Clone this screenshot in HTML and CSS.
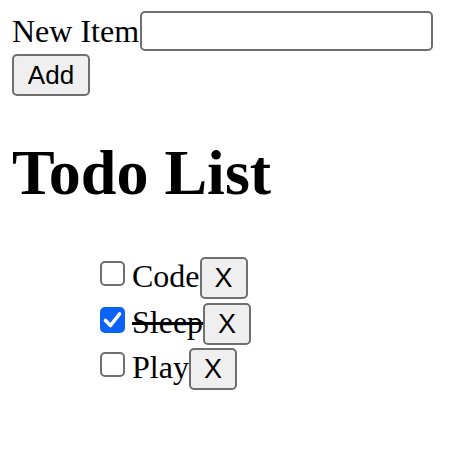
FILE: index.html
```html
<!DOCTYPE html>
<html>
<head>
<meta charset="utf-8">
<link rel="stylesheet" href="styles.css">
</head>
<body>
<div class="form-row">
  <label class="label" for="item">New Item</label>
  <input id="item" class="text-input" type="text">
</div>
<button class="btn add-btn">Add</button>
<h1 class="title">Todo List</h1>
<ul class="todo-list">
  <li class="todo">
    <span class="box"></span>
    <span class="todo-text">Code</span>
    <button class="btn x-btn">X</button>
  </li>
  <li class="todo">
    <span class="box checked"><svg width="25" height="26" viewBox="0 0 25 26"><path d="M5.5 13.5 L10.5 18.5 L19.5 7" fill="none" stroke="#fff" stroke-width="3.6" stroke-linecap="round" stroke-linejoin="round"/></svg></span>
    <span class="todo-text done">Sleep</span>
    <button class="btn x-btn">X</button>
  </li>
  <li class="todo">
    <span class="box"></span>
    <span class="todo-text">Play</span>
    <button class="btn x-btn">X</button>
  </li>
</ul>
</body>
</html>
```

FILE: styles.css
```css
html, body {
  background: #fff;
}
body {
  margin: 11px 12px;
  font-family: "Liberation Serif", "Times New Roman", serif;
  font-size: 32px;
  color: #000;
}
.form-row {
  display: flex;
  align-items: flex-start;
  height: 40px;
}
.label {
  padding-top: 2px;
  line-height: 37px;
}
.text-input {
  box-sizing: border-box;
  width: 293px;
  height: 40px;
  margin: 0 0 0 1px;
  border: 2px solid #6f6f6f;
  border-radius: 5px;
  background: #fff;
  font-size: 26px;
  padding: 0 6px;
}
.btn {
  display: block;
  box-sizing: border-box;
  margin: 0;
  height: 42px;
  padding: 4px 0;
  border: 2px solid #6f6f6f;
  border-radius: 5px;
  background: #efefef;
  font-family: "Liberation Sans", Arial, sans-serif;
  font-size: 26px;
  line-height: 30px;
  color: #000;
  text-align: center;
}
.add-btn {
  margin-top: 3px;
  width: 78px;
}
.title {
  margin: 41px 0 0;
  font-size: 64px;
  line-height: 72px;
  font-weight: bold;
}
.todo-list {
  list-style: none;
  margin: 48px 0 0;
  padding: 0 0 0 88px;
}
.todo {
  display: flex;
  align-items: flex-start;
  height: 45.5px;
}
.box {
  box-sizing: border-box;
  width: 25px;
  height: 25px;
  margin-top: 4px;
  margin-right: 7px;
  border: 2px solid #6f6f6f;
  border-radius: 5px;
  background: #fff;
}
.box.checked {
  width: 25px;
  height: 26px;
  border: none;
  background: #0b63f6;
  display: flex;
}
.todo-text {
  padding-top: 1px;
  line-height: 37px;
}
.done {
  text-decoration: line-through;
}
.x-btn {
  width: 48px;
  font-size: 27px;
}
```
